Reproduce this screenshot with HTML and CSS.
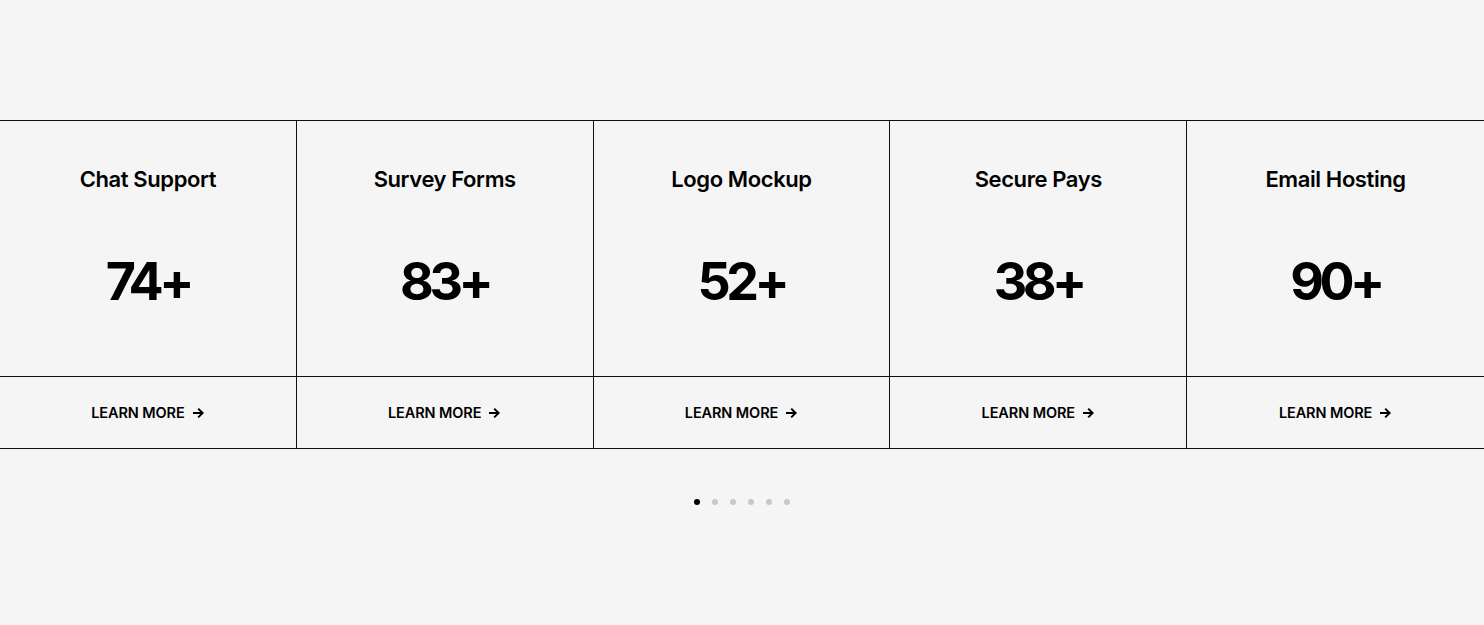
FILE: index.html
```html
<!DOCTYPE html>
<html lang="en">
<head>
  <meta charset="UTF-8" />
  <meta name="viewport" content="width=device-width, initial-scale=1.0"/>
  <title>Services</title>
  <link rel="stylesheet" href="styles.css">
</head>
<body>
  <section class="services">
    <div class="grid">
      <div class="card">
        <div class="card-top">
          <h3>Chat Support</h3>
          <div class="count">74+</div>
        </div>
        <a class="more" href="#">LEARN MORE <svg viewBox="0 0 14 14"><path d="M2 7h9.5M7.2 2.6 11.6 7l-4.4 4.4"/></svg></a>
      </div>
      <div class="card">
        <div class="card-top">
          <h3>Survey Forms</h3>
          <div class="count">83+</div>
        </div>
        <a class="more" href="#">LEARN MORE <svg viewBox="0 0 14 14"><path d="M2 7h9.5M7.2 2.6 11.6 7l-4.4 4.4"/></svg></a>
      </div>
      <div class="card">
        <div class="card-top">
          <h3>Logo Mockup</h3>
          <div class="count">52+</div>
        </div>
        <a class="more" href="#">LEARN MORE <svg viewBox="0 0 14 14"><path d="M2 7h9.5M7.2 2.6 11.6 7l-4.4 4.4"/></svg></a>
      </div>
      <div class="card">
        <div class="card-top">
          <h3>Secure Pays</h3>
          <div class="count">38+</div>
        </div>
        <a class="more" href="#">LEARN MORE <svg viewBox="0 0 14 14"><path d="M2 7h9.5M7.2 2.6 11.6 7l-4.4 4.4"/></svg></a>
      </div>
      <div class="card">
        <div class="card-top">
          <h3>Email Hosting</h3>
          <div class="count">90+</div>
        </div>
        <a class="more" href="#">LEARN MORE <svg viewBox="0 0 14 14"><path d="M2 7h9.5M7.2 2.6 11.6 7l-4.4 4.4"/></svg></a>
      </div>
    </div>
    <div class="dots">
      <span class="dot active"></span>
      <span class="dot"></span>
      <span class="dot"></span>
      <span class="dot"></span>
      <span class="dot"></span>
      <span class="dot"></span>
    </div>
  </section>
</body>
</html>
```

FILE: styles.css
```css
body {
  margin: 0;
  background-color: #f5f5f5;
  color: #000;
  font-family: 'Inter', sans-serif;
}
.services {
  padding-top: 120px;
}
.grid {
  display: grid;
  grid-template-columns: repeat(5, 1fr);
  border-top: 1px solid #111;
  border-bottom: 1px solid #111;
}
.card {
  border-right: 1px solid #111;
  text-align: center;
}
.card:last-child {
  border-right: none;
}
.card-top {
  height: 256px;
  box-sizing: border-box;
  padding-top: 43px;
  border-bottom: 1px solid #111;
}
.card-top h3 {
  margin: 0;
  font-size: 22px;
  line-height: 30px;
  font-weight: 600;
  letter-spacing: -0.4px;
}
.count {
  margin-top: 58px;
  font-size: 52px;
  line-height: 60px;
  font-weight: 700;
  letter-spacing: -4.5px;
}
.more {
  display: flex;
  align-items: center;
  justify-content: center;
  gap: 6px;
  height: 71px;
  color: #000;
  text-decoration: none;
  font-size: 14.5px;
  font-weight: 600;
  letter-spacing: -0.1px;
}
.more svg {
  width: 14px;
  height: 14px;
  fill: none;
  stroke: #000;
  stroke-width: 2;
}
.dots {
  display: flex;
  justify-content: center;
  gap: 12px;
  margin-top: 50px;
}
.dot {
  width: 6px;
  height: 6px;
  border-radius: 50%;
  background-color: #c8c8c8;
}
.dot.active {
  background-color: #000;
}
```
